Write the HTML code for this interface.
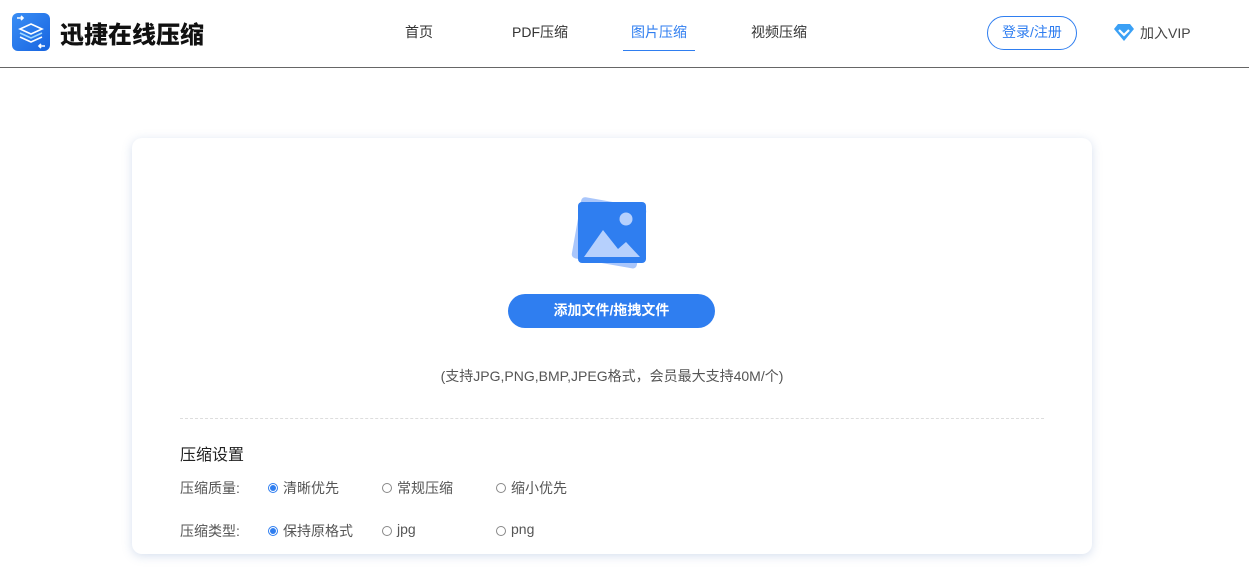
<!DOCTYPE html>
<html><head><meta charset="utf-8"><style>
*{margin:0;padding:0;box-sizing:border-box}
body{width:1249px;height:572px;background:#fff;font-family:"Liberation Sans","Noto Sans CJK SC",sans-serif;position:relative;overflow:hidden;color:#333}
.hdr{position:absolute;left:0;top:0;width:1249px;height:68px;border-bottom:1px solid #666}
.logo{position:absolute;left:12px;top:13px;width:38px;height:38px;border-radius:6px;background:linear-gradient(135deg,#3a8ef5,#1764e0)}
.brand{position:absolute;left:60px;top:16px;font-size:24px;font-weight:900;color:#111;letter-spacing:0;font-family:"Noto Sans CJK SC",sans-serif;line-height:34px}
.nav{position:absolute;top:22px;font-size:14px;color:#333}
.act{color:#2f7ef0}
.uline{position:absolute;left:623px;top:50px;width:72px;height:1px;background:#2f7ef0}
.login{position:absolute;left:987px;top:16px;width:90px;height:34px;border:1px solid #2f7ef0;border-radius:17px;color:#2f7ef0;font-size:14px;text-align:center;line-height:31px}
.vip{position:absolute;left:1140px;top:23px;font-size:14px;color:#444}
.card{position:absolute;left:132px;top:138px;width:960px;height:416px;border-radius:10px;background:#fff;box-shadow:0 2px 10px rgba(120,150,200,.3)}
.btn{position:absolute;left:376px;top:156px;width:207px;height:34px;border-radius:17px;background:#2f7ef0;color:#fff;font-size:14px;font-weight:bold;text-align:center;line-height:33px}
.tip{position:absolute;left:0;width:960px;top:228px;text-align:center;font-size:14px;color:#555}
.dash{position:absolute;left:48px;top:280px;width:864px;border-top:1px dashed #ddd}
.t{position:absolute;font-size:14px;color:#555}
.r{position:absolute;width:10px;height:10px;border-radius:50%;border:1px solid #888}
.r.on{border-color:#2f7ef0}
.r.on::after{content:"";position:absolute;left:1px;top:1px;width:6px;height:6px;border-radius:50%;background:#2f7ef0}
</style></head><body>
<div class="hdr">
<div class="logo"><svg width="38" height="38" viewBox="0 0 38 38" fill="none" stroke="#fff" stroke-width="1.6"><path d="M5 5h6M9 3l2 2-2 2"/><path d="M33 33h-6M29 31l-2 2 2 2"/><path d="M19 11l11 5-11 5-11-5z"/><path d="M8 20l11 5 11-5" stroke="#9fd8ff"/><path d="M8 24l11 5 11-5"/></svg></div>
<div class="brand">迅捷在线压缩</div>
<div class="nav" style="left:405px">首页</div>
<div class="nav" style="left:512px">PDF压缩</div>
<div class="nav act" style="left:631px">图片压缩</div>
<div class="nav" style="left:751px">视频压缩</div>
<div class="uline"></div>
<div class="login">登录/注册</div>
<svg style="position:absolute;left:1114px;top:24px" width="20" height="17" viewBox="0 0 20 17"><path d="M4 0h12l4 5-10 12L0 5z" fill="#3aa0f5"/><path d="M5 6l5 5 5-5" stroke="#fff" stroke-width="2.2" fill="none"/></svg>
<div class="vip">加入VIP</div>
</div>
<div class="card">
<svg style="position:absolute;left:436px;top:56px" width="86" height="82" viewBox="0 0 86 82"><rect x="8" y="8" width="66" height="62" rx="4" fill="#a9c6fb" transform="rotate(10 42 39)"/><rect x="10" y="8" width="68" height="61" rx="4" fill="#2f7ef0"/><circle cx="58" cy="25" r="6.5" fill="#b6d0fd"/><path d="M16 63l19-27 15 19 8-7 14 15z" fill="#b6d0fd"/></svg>
<div class="btn">添加文件/拖拽文件</div>
<div class="tip">(支持JPG,PNG,BMP,JPEG格式，会员最大支持40M/个)</div>
<div class="dash"></div>
<div class="t" style="left:48px;top:303px;font-size:16px;color:#222">压缩设置</div>
<div class="t" style="left:48px;top:340px">压缩质量:</div>
<div class="r on" style="left:136px;top:345px"></div><div class="t" style="left:151px;top:340px">清晰优先</div>
<div class="r" style="left:250px;top:345px"></div><div class="t" style="left:265px;top:340px">常规压缩</div>
<div class="r" style="left:364px;top:345px"></div><div class="t" style="left:379px;top:340px">缩小优先</div>
<div class="t" style="left:48px;top:383px">压缩类型:</div>
<div class="r on" style="left:136px;top:388px"></div><div class="t" style="left:151px;top:383px">保持原格式</div>
<div class="r" style="left:250px;top:388px"></div><div class="t" style="left:265px;top:383px">jpg</div>
<div class="r" style="left:364px;top:388px"></div><div class="t" style="left:379px;top:383px">png</div>
</div>
</body></html>
